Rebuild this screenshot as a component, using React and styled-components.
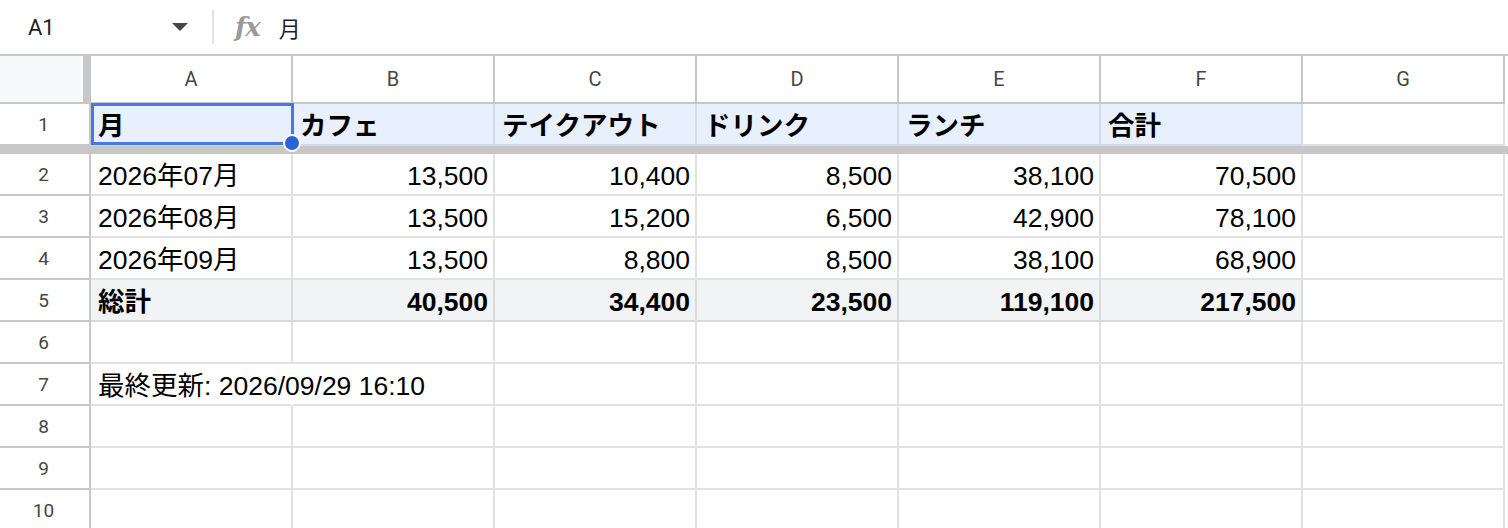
import React from 'react'
import styled, { createGlobalStyle } from 'styled-components'

const GlobalStyle = createGlobalStyle`
  html, body {
    margin: 0;
    padding: 0;
    background: #fff;
    overflow: hidden;
  }
  body {
    font-family: "Liberation Sans", "Noto Sans CJK JP", sans-serif;
  }
`

const columns = ['A', 'B', 'C', 'D', 'E', 'F', 'G']

const rows = [
  { n: 1, kind: 'head', cells: ['月', 'カフェ', 'テイクアウト', 'ドリンク', 'ランチ', '合計', ''] },
  { n: 2, cells: ['2026年07月', '13,500', '10,400', '8,500', '38,100', '70,500', ''] },
  { n: 3, cells: ['2026年08月', '13,500', '15,200', '6,500', '42,900', '78,100', ''] },
  { n: 4, cells: ['2026年09月', '13,500', '8,800', '8,500', '38,100', '68,900', ''] },
  { n: 5, kind: 'total', cells: ['総計', '40,500', '34,400', '23,500', '119,100', '217,500', ''] },
  { n: 6, cells: ['', '', '', '', '', '', ''] },
  { n: 7, kind: 'note', cells: ['最終更新: 2026/09/29 16:10', '', '', '', '', '', ''] },
  { n: 8, cells: ['', '', '', '', '', '', ''] },
  { n: 9, cells: ['', '', '', '', '', '', ''] },
  { n: 10, cells: ['', '', '', '', '', '', ''] }
]

const App = () => (
  <Page>
    <GlobalStyle />
    <Toolbar>
      <NameBox>
        <CellRef>A1</CellRef>
        <Caret />
      </NameBox>
      <Divider />
      <FxIcon>fx</FxIcon>
      <Formula>月</Formula>
    </Toolbar>
    <Sheet>
      <Row>
        <Corner />
        {columns.map(c => (
          <ColHead key={c}>{c}</ColHead>
        ))}
        <Filler />
      </Row>
      {rows.map(row => (
        <React.Fragment key={row.n}>
          <Row>
            <RowHead>{row.n}</RowHead>
            {row.cells.map((text, i) => {
              const isNum = i > 0 && i < 6 && row.n > 1
              const tinted = i < 6 && (row.kind === 'head' || row.kind === 'total')
              const selected = row.n === 1 && i === 0
              return (
                <Cell
                  key={i}
                  $tint={tinted ? row.kind : null}
                  $bold={row.kind === 'head' || row.kind === 'total'}
                  $right={isNum}
                  $overflow={(row.kind === 'note' && i === 0) || selected}
                  $noLine={row.kind === 'note' && i === 0}
                >
                  {text && <CellText>{text}</CellText>}
                  {selected && (
                    <Selection>
                      <Handle />
                    </Selection>
                  )}
                </Cell>
              )
            })}
            <Filler />
          </Row>
          {row.n === 1 && <FreezeBar />}
        </React.Fragment>
      ))}
    </Sheet>
  </Page>
)

export default App

const Page = styled.div`
  width: 1508px;
  height: 528px;
  overflow: hidden;
  background: #fff;
`

const Toolbar = styled.div`
  display: flex;
  align-items: center;
  height: 54px;
  border-bottom: 2px solid #c7c7c7;
  box-sizing: content-box;
`

const NameBox = styled.div`
  display: flex;
  align-items: center;
  justify-content: space-between;
  width: 212px;
  box-sizing: border-box;
  padding: 0 24px 0 28px;
`

const CellRef = styled.div`
  font-family: Roboto, "Liberation Sans", sans-serif;
  font-size: 22px;
  color: #1f1f1f;
`

const Caret = styled.div`
  width: 0;
  height: 0;
  border-left: 8px solid transparent;
  border-right: 8px solid transparent;
  border-top: 8px solid #444746;
`

const Divider = styled.div`
  width: 2px;
  height: 34px;
  background: #e3e3e3;
`

const FxIcon = styled.div`
  margin-left: 21px;
  font-family: "DejaVu Serif", "Liberation Serif", serif;
  font-style: italic;
  font-weight: bold;
  font-size: 26px;
  letter-spacing: -1px;
  color: #9a9a9a;
  line-height: 1;
`

const Formula = styled.div`
  margin-left: 19px;
  font-family: "Noto Sans CJK JP", sans-serif;
  font-size: 22px;
  color: #1f1f1f;
`

const Sheet = styled.div`
  display: flex;
  flex-direction: column;
`

const Row = styled.div`
  display: grid;
  grid-template-columns: 91px repeat(7, 202px) 1fr;
  height: 42px;
  &:first-child {
    height: 48px;
  }
`

const Corner = styled.div`
  box-sizing: border-box;
  background: #f8f9fa;
  border-right: 8px solid #c7c7c7;
  border-bottom: 2px solid #c7c7c7;
`

const ColHead = styled.div`
  box-sizing: border-box;
  display: flex;
  align-items: center;
  justify-content: center;
  border-right: 2px solid #c7c7c7;
  border-bottom: 2px solid #c7c7c7;
  font-family: Roboto, "Liberation Sans", sans-serif;
  font-size: 20px;
  color: #444746;
`

const RowHead = styled.div`
  box-sizing: border-box;
  display: flex;
  align-items: center;
  justify-content: center;
  padding-right: 2px;
  border-right: 2px solid #c7c7c7;
  border-bottom: 2px solid #c7c7c7;
  font-family: Roboto, "Liberation Sans", sans-serif;
  font-size: 19px;
  color: #444746;
`

const tints = {
  head: { bg: '#e8f0fe', line: '#d2dbeb' },
  total: { bg: '#f1f3f4', line: '#d9d9d9' }
}

const Cell = styled.div`
  position: relative;
  box-sizing: border-box;
  display: flex;
  align-items: flex-end;
  justify-content: ${p => (p.$right ? 'flex-end' : 'flex-start')};
  padding: 0 5px 3px 7px;
  background: ${p => (p.$tint ? tints[p.$tint].bg : '#fff')};
  border-right: 2px solid ${p => (p.$noLine ? 'transparent' : p.$tint ? tints[p.$tint].line : '#e1e1e1')};
  border-bottom: 2px solid ${p => (p.$tint ? tints[p.$tint].line : '#e1e1e1')};
  font-size: 26.5px;
  font-weight: ${p => (p.$bold ? 700 : 400)};
  color: #000;
  white-space: nowrap;
  overflow: ${p => (p.$overflow ? 'visible' : 'hidden')};
  z-index: ${p => (p.$overflow ? 2 : 0)};
`

const CellText = styled.span`
  line-height: 30px;
`

const Filler = styled.div`
  border-bottom: 2px solid transparent;
`

const FreezeBar = styled.div`
  height: 8px;
  background: #c7c7c7;
`

const Selection = styled.div`
  position: absolute;
  left: 0;
  top: -1px;
  right: -3px;
  bottom: -1px;
  border: 3px solid #4479e6;
  pointer-events: none;
`

const Handle = styled.div`
  position: absolute;
  right: -10px;
  bottom: -10px;
  width: 14px;
  height: 14px;
  border-radius: 50%;
  background: #2a63d6;
  border: 2px solid #fff;
`
